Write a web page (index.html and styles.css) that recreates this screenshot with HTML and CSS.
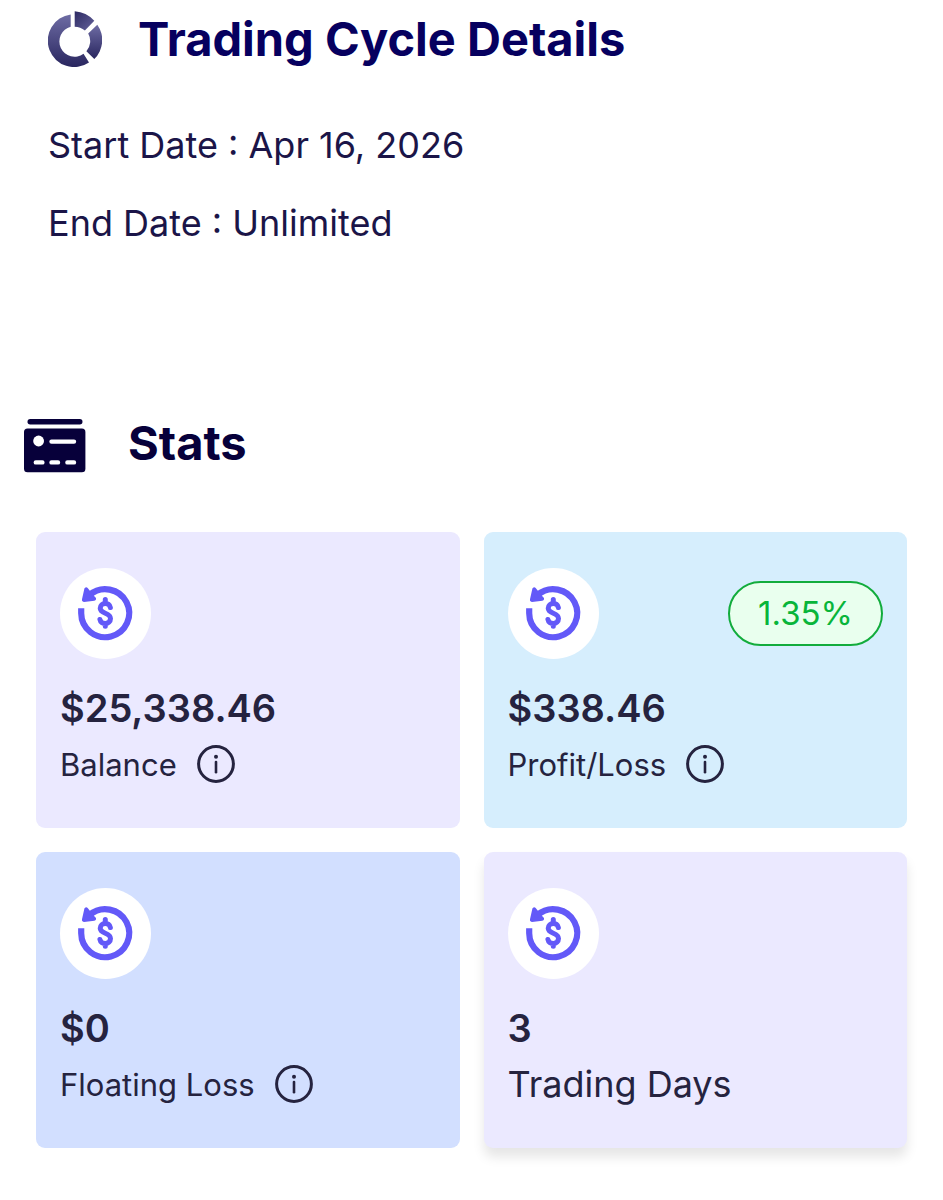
FILE: index.html
```html
<!DOCTYPE html>
<html lang="en">
<head>
<meta charset="UTF-8" />
<meta name="viewport" content="width=device-width, initial-scale=1" />
<title>Trading Cycle Details</title>
<link rel="stylesheet" href="styles.css">
</head>
<body>
  <!-- shared icons -->
  <svg class="sprite" aria-hidden="true">
    <symbol id="icon-refund" viewBox="0 0 91 91">
      <path d="M21.2 40.3V45.3A24 24 0 1 0 29.5 27" fill="none" stroke="#6359f8" stroke-width="6.2" />
      <path d="M26.2 21.2L23.8 32L34.2 30.8L32 28.6L31.4 25L29 24.6Z" fill="#6359f8" stroke="#6359f8" stroke-width="3.8" stroke-linejoin="round" />
      <path d="M45.3 31.4V35M45.3 56V58.2M50.4 39.6C49.6 33.8 40.2 34.2 40.2 40.2C40.2 43 42.3 44 45.3 45.2C48.4 46.4 50.5 47.6 50.5 50.6C50.5 57 40.8 57.2 39.9 51.4" fill="none" stroke="#6359f8" stroke-width="5" stroke-linecap="round" stroke-linejoin="round" />
    </symbol>
    <symbol id="icon-info" viewBox="0 0 38 38">
      <circle cx="19" cy="19" r="17.4" fill="none" stroke="#25233f" stroke-width="3" />
      <circle cx="19" cy="11.8" r="2" fill="#25233f" />
      <path d="M19 17V27.2" stroke="#25233f" stroke-width="2.6" stroke-linecap="round" />
    </symbol>
  </svg>

  <section class="cycle">
    <div class="cycle-head">
      <svg class="cycle-icon" viewBox="0 -1 54 56" aria-hidden="true">
        <defs>
          <linearGradient id="ringGrad" x1="0" y1="0" x2="0" y2="1">
            <stop offset="0" stop-color="#6e6ca4" />
            <stop offset="1" stop-color="#29265f" />
          </linearGradient>
          <linearGradient id="topGrad" x1="0" y1="0" x2="1" y2="1">
            <stop offset="0" stop-color="#2d2a63" />
            <stop offset="1" stop-color="#65639b" />
          </linearGradient>
        </defs>
        <path d="M22.7 2.5A26.4 26.4 0 1 0 41 50.5L35.5 41.8A15.2 15.2 0 1 1 22.7 14.8Z" fill="url(#ringGrad)" />
        <path d="M26.7 -.7A29 29 0 0 1 46.3 8.8L36.9 18.6A17 17 0 0 0 26.7 14.7Z" fill="url(#topGrad)" />
        <path d="M49.3 12.7A26.5 26.5 0 0 1 46.3 47L38.4 39.2A15.2 15.2 0 0 0 40.2 21.6Z" fill="url(#ringGrad)" />
      </svg>
      <h1>Trading Cycle Details</h1>
    </div>
    <p class="cycle-date">Start Date : Apr 16, 2026</p>
    <p class="cycle-date">End Date : Unlimited</p>
  </section>

  <section class="stats">
    <div class="stats-head">
      <svg class="stats-icon" viewBox="0 0 62 54" aria-hidden="true">
        <rect x="3.5" y="0" width="55" height="5.4" rx="2.7" fill="#07003a" />
        <rect x="0" y="9.6" width="61.4" height="43.6" rx="3.5" fill="#07003a" />
        <circle cx="14.6" cy="22" r="5.4" fill="#fff" />
        <path d="M27.5 22.6H50M11.8 43.4H18.4M27.5 43.4H34M43.4 43.4H50" stroke="#fff" stroke-width="4.4" stroke-linecap="round" />
      </svg>
      <h2>Stats</h2>
    </div>

    <div class="cards">
      <div class="card card-purple">
        <div class="card-top">
          <svg class="card-icon" aria-hidden="true"><use href="#icon-refund" /></svg>
        </div>
        <div class="value">$25,338.46</div>
        <div class="label">Balance
          <button type="button" class="info" aria-label="About balance"><svg><use href="#icon-info" /></svg></button>
        </div>
      </div>

      <div class="card card-sky">
        <div class="card-top">
          <svg class="card-icon" aria-hidden="true"><use href="#icon-refund" /></svg>
          <span class="badge">1.35%</span>
        </div>
        <div class="value">$338.46</div>
        <div class="label">Profit/Loss
          <button type="button" class="info" aria-label="About profit and loss"><svg><use href="#icon-info" /></svg></button>
        </div>
      </div>

      <div class="card card-blue">
        <div class="card-top">
          <svg class="card-icon" aria-hidden="true"><use href="#icon-refund" /></svg>
        </div>
        <div class="value">$0</div>
        <div class="label">Floating Loss
          <button type="button" class="info" aria-label="About floating loss"><svg><use href="#icon-info" /></svg></button>
        </div>
      </div>

      <div class="card card-purple card-raised">
        <div class="card-top">
          <svg class="card-icon" aria-hidden="true"><use href="#icon-refund" /></svg>
        </div>
        <div class="value">3</div>
        <div class="label label-large">Trading Days</div>
      </div>
    </div>
  </section>
</body>
</html>
```
FILE: styles.css
```css
* {
  box-sizing: border-box;
}
body {
  margin: 0;
  background: #fff;
  color: #25233f;
  font-family: Inter, "Liberation Sans", sans-serif;
}
h1, h2, p {
  margin: 0;
}
h1, h2 {
  font-weight: 700;
  line-height: 60px;
}
svg {
  display: block;
}
.sprite {
  display: none;
}

/* trading cycle */
.cycle {
  padding: 9px 48px 0;
}
.cycle-head {
  display: flex;
  align-items: center;
  gap: 36px;
  margin-bottom: 49px;
}
.cycle-icon {
  width: 54px;
  height: 56px;
}
h1 {
  color: #06005f;
  font-size: 47px;
}
.cycle-date {
  color: #1b1548;
  font-size: 36px;
  line-height: 54px;
  margin-bottom: 24px;
}

/* stats */
.stats {
  padding: 139px 36px 48px;
}
.stats-head {
  display: flex;
  align-items: flex-end;
  gap: 42px;
  margin: 0 0 59px -12px;
}
.stats-icon {
  width: 62px;
  height: 54px;
}
h2 {
  color: #07003a;
  font-size: 47px;
}
.cards {
  display: grid;
  grid-template-columns: 1fr 1fr;
  gap: 24px;
}
.card {
  padding: 36px 24px 38px;
  border-radius: 9px;
}
.card-purple { background: #ebe9ff; }
.card-sky { background: #d6eefd; }
.card-blue { background: #d2dfff; }
.card-raised {
  box-shadow: 0 9px 12px rgba(0, 0, 0, 0.1);
}
.card-top {
  display: flex;
  align-items: center;
  justify-content: space-between;
}
.card-icon {
  width: 91px;
  height: 91px;
  border-radius: 50%;
  background: #fff;
}
.badge {
  padding: 0 28px;
  border: 2px solid #12ac3c;
  border-radius: 33px;
  background: #e9ffee;
  color: #08b53a;
  font-size: 33px;
  line-height: 61px;
}
.value {
  margin-top: 19px;
  font-size: 38px;
  font-weight: 600;
  line-height: 60px;
}
.label {
  display: flex;
  align-items: center;
  gap: 20px;
  height: 52px;
  font-size: 31px;
}
.label-large {
  font-size: 36px;
}
.info {
  padding: 0;
  border: none;
  background: none;
  cursor: pointer;
}
.info svg {
  width: 38px;
  height: 38px;
}
```
